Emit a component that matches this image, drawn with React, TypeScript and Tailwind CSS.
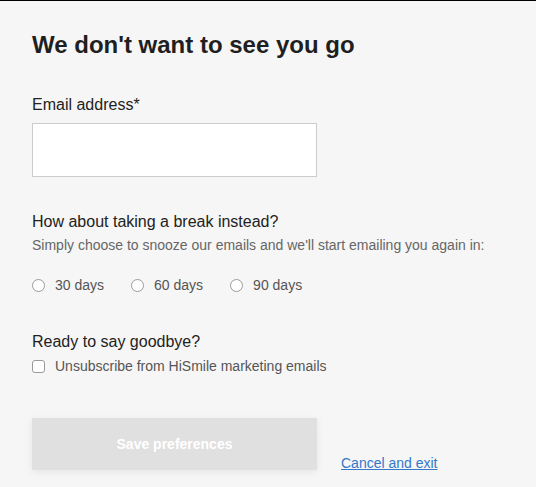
import React from "react";

function Radio({ label }: { label: string }) {
  return (
    <label className="flex items-center gap-[10px]">
      <span className="w-[13px] h-[13px] rounded-full border border-[#9a9a9a] bg-white shrink-0" />
      <span className="text-[14px] leading-[18px] text-[#555]">{label}</span>
    </label>
  );
}

export default function App() {
  return (
    <div
      className="w-[536px] h-[487px] bg-[#f6f6f6] border-t border-black overflow-hidden"
      style={{ fontFamily: '"Liberation Sans", Arial, sans-serif' }}
    >
      <div className="pl-[32px] pt-[30px] flex flex-col">
        <h1 className="text-[24px] leading-[28px] font-bold text-[#1f1f21]">We don't want to see you go</h1>

        <div className="mt-[36px] text-[16px] leading-[20px] text-[#222]">Email address*</div>
        <input className="mt-[8px] w-[285px] h-[54px] bg-white border border-[#cccccc] outline-none" />

        <div className="mt-[35px] text-[16px] leading-[20px] text-[#222]">How about taking a break instead?</div>
        <div className="mt-[4px] text-[14px] leading-[18px] text-[#666]">
          Simply choose to snooze our emails and we'll start emailing you again in:
        </div>

        <div className="mt-[22px] flex items-center gap-[27px]">
          <Radio label="30 days" />
          <Radio label="60 days" />
          <Radio label="90 days" />
        </div>

        <div className="mt-[38px] text-[16px] leading-[20px] text-[#222]">Ready to say goodbye?</div>
        <label className="mt-[5px] flex items-center gap-[10px]">
          <span className="w-[13px] h-[13px] rounded-[3px] border border-[#9a9a9a] bg-white shrink-0" />
          <span className="text-[14px] leading-[18px] text-[#555]">Unsubscribe from HiSmile marketing emails</span>
        </label>

        <div className="mt-[43px] flex items-start gap-[24px]">
          <button className="w-[285px] h-[52px] bg-[#e0e0e0] text-white font-bold text-[14px] shadow-[0_2px_8px_rgba(0,0,0,0.07)]">
            Save preferences
          </button>
          <a className="mt-[36px] text-[14px] leading-[18px] text-[#3478c8] underline">Cancel and exit</a>
        </div>
      </div>
    </div>
  );
}
